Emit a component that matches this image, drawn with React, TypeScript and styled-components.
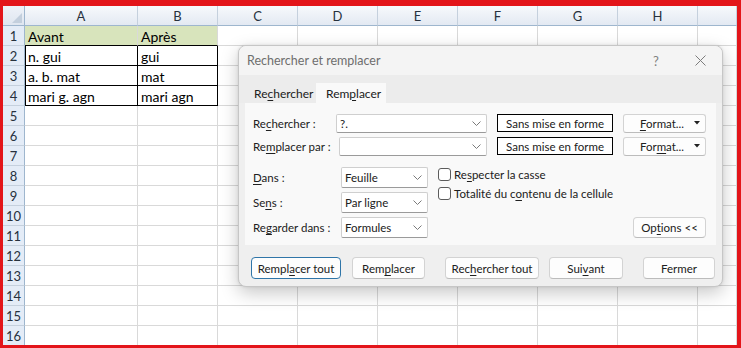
import React from 'react';
import styled, { createGlobalStyle } from 'styled-components';

const GlobalStyle = createGlobalStyle`
  html, body { margin: 0; padding: 0; background: #fff; }
  body { font-family: "Noto Sans", "Liberation Sans", sans-serif; }
`;

const Frame = styled.div`
  position: relative;
  width: 741px;
  height: 348px;
  box-sizing: border-box;
  border-style: solid;
  border-color: #e3151a;
  border-width: 6px 4px 3px 3px;
  overflow: hidden;
  background: #fff;
`;

const Sheet = styled.div`
  display: grid;
  grid-template-columns: 22px 113px repeat(7, 80px) 1fr;
  grid-auto-rows: 20px;
  font-family: Lato, "Liberation Sans", sans-serif;
`;

const Corner = styled.div`
  position: relative;
  box-sizing: border-box;
  background: linear-gradient(#eef2f8, #dfe6f0);
  border-right: 1px solid #9eb6ce;
  border-bottom: 1px solid #9eb6ce;
  &::after {
    content: '';
    position: absolute;
    right: 2px;
    bottom: 2px;
    border-style: solid;
    border-width: 0 0 10px 10px;
    border-color: transparent transparent #c3cfdd transparent;
  }
`;

const ColHead = styled.div`
  box-sizing: border-box;
  background: linear-gradient(#f7f9fc, #e3e9f2);
  border-right: 1px solid #c5d0dd;
  border-bottom: 1px solid #9eb6ce;
  display: flex;
  align-items: center;
  justify-content: center;
  font-size: 13px;
  color: #27313d;
`;

const RowHead = styled.div`
  box-sizing: border-box;
  background: #e4ecf7;
  border-right: 1px solid #9eb6ce;
  border-bottom: 1px solid #c5d0dd;
  display: flex;
  align-items: center;
  justify-content: center;
  font-size: 13px;
  color: #27313d;
`;

const Cell = styled.div<{ $green?: boolean; $boxed?: boolean; $bottomDark?: boolean; $leftDark?: boolean }>`
  box-sizing: border-box;
  background: ${(p) => (p.$green ? '#d8e4bc' : '#fff')};
  border-right: 1px solid ${(p) => (p.$boxed ? '#000' : '#d9d9d9')};
  border-bottom: 1px solid ${(p) => (p.$boxed || p.$bottomDark ? '#000' : '#d9d9d9')};
  box-shadow: ${(p) => (p.$leftDark ? 'inset 1px 0 0 #000' : 'none')};
  display: flex;
  align-items: center;
  padding: 1px 0 0 3px;
  font-size: 14px;
  color: #000;
  white-space: nowrap;
  overflow: hidden;
`;

const Dialog = styled.div`
  position: absolute;
  left: 235px;
  top: 39px;
  width: 485px;
  height: 242px;
  box-sizing: border-box;
  border: 1px solid #c6c6c6;
  border-radius: 8px;
  background: #efefef;
  box-shadow: 0 6px 18px rgba(0, 0, 0, 0.22), 0 0 3px rgba(0, 0, 0, 0.1);
  display: flex;
  flex-direction: column;
  overflow: hidden;
  font-family: Lato, "Noto Sans", sans-serif;
  font-size: 11.5px;
  color: #202020;
`;

const TitleBar = styled.div`
  height: 29px;
  flex: none;
  display: flex;
  align-items: center;
  background: #f4f4f4;
  padding-left: 8px;
`;

const Title = styled.div`
  flex: 1;
  color: #6e6e6e;
  font-size: 12.5px;
`;

const TitleButton = styled.div<{ $w: number }>`
  width: ${(p) => p.$w}px;
  height: 29px;
  display: flex;
  align-items: center;
  justify-content: center;
  color: #808080;
  font-size: 13px;
`;

const TabStrip = styled.div`
  height: 28px;
  flex: none;
  display: flex;
  align-items: flex-end;
  padding-left: 9px;
  background: #ececec;
`;

const Tab = styled.div<{ $w: number; $pad: number; $active?: boolean }>`
  width: ${(p) => p.$w}px;
  height: 20px;
  box-sizing: border-box;
  padding-left: ${(p) => p.$pad}px;
  display: flex;
  align-items: center;
  background: ${(p) => (p.$active ? '#f9f9f9' : 'transparent')};
  font-size: 12px;
`;

const Panel = styled.div`
  margin: 0 6px;
  height: 142px;
  flex: none;
  box-sizing: border-box;
  background: #f9f9f9;
  padding: 11px 10px 7px 8px;
  display: flex;
  flex-direction: column;
`;

const FindRow = styled.div<{ $top?: number }>`
  display: flex;
  align-items: center;
  height: 18px;
  margin-top: ${(p) => p.$top ?? 0}px;
`;

const Label = styled.div<{ $w: number }>`
  width: ${(p) => p.$w}px;
  flex: none;
  white-space: nowrap;
`;

const Combo = styled.div<{ $w: number; $h: number }>`
  width: ${(p) => p.$w}px;
  height: ${(p) => p.$h}px;
  flex: none;
  box-sizing: border-box;
  background: #fff;
  border: 1px solid #cfcfcf;
  border-bottom-color: #9a9a9a;
  border-radius: 2px;
  display: flex;
  align-items: center;
  padding: 0 5px 0 3px;
`;

const ComboText = styled.div`
  flex: 1;
  white-space: nowrap;
`;

const FormatBox = styled.div`
  width: 116px;
  height: 18px;
  margin-left: 10px;
  flex: none;
  box-sizing: border-box;
  border: 1px solid #000;
  background: #fff;
  display: flex;
  align-items: center;
  justify-content: center;
`;

const FormatButton = styled.div`
  width: 83px;
  height: 19px;
  margin-left: 10px;
  flex: none;
  box-sizing: border-box;
  border: 1px solid #d3d3d3;
  border-bottom-color: #bcbcbc;
  border-radius: 3px;
  background: #fdfdfd;
  display: flex;
  align-items: center;
  justify-content: flex-end;
  gap: 10px;
  padding-right: 5px;
`;

const Lower = styled.div`
  display: flex;
  margin-top: 12px;
`;

const LeftCol = styled.div`
  display: flex;
  flex-direction: column;
  gap: 4px;
`;

const OptRow = styled.div`
  display: flex;
  align-items: center;
  height: 21px;
`;

const Checks = styled.div`
  flex: 1;
  display: flex;
  flex-direction: column;
  gap: 6px;
  margin-left: 10px;
  padding-top: 1px;
`;

const CheckRow = styled.div`
  display: flex;
  align-items: center;
  gap: 3px;
  height: 13px;
`;

const CheckBox = styled.div`
  width: 13px;
  height: 13px;
  box-sizing: border-box;
  border: 1px solid #5c5c5c;
  border-radius: 3px;
  background: #fff;
`;

const Button = styled.div<{ $w: number; $gap?: number; $primary?: boolean }>`
  width: ${(p) => p.$w}px;
  height: 22px;
  margin-left: ${(p) => p.$gap ?? 0}px;
  flex: none;
  box-sizing: border-box;
  border: 1px solid ${(p) => (p.$primary ? '#2f75a8' : '#d3d3d3')};
  border-bottom-color: ${(p) => (p.$primary ? '#2f75a8' : '#bcbcbc')};
  border-radius: 4px;
  background: #fdfdfd;
  display: flex;
  align-items: center;
  justify-content: center;
  white-space: nowrap;
`;

const OptionsButton = styled(Button)`
  height: 21px;
  align-self: flex-end;
`;

const ButtonBar = styled.div`
  display: flex;
  margin-top: 12px;
  padding-left: 12px;
`;

const Key = styled.span`
  text-decoration: underline;
  text-underline-offset: 2px;
`;

const Chevron = () => (
  <svg width="9" height="5" viewBox="0 0 9 5">
    <path d="M0.5 0.5 L4.5 4.5 L8.5 0.5" fill="none" stroke="#7a7a7a" strokeWidth="1" />
  </svg>
);

const Caret = () => (
  <svg width="6" height="4" viewBox="0 0 6 4">
    <path d="M0 0 H6 L3 3.5 Z" fill="#222" />
  </svg>
);

const CloseIcon = () => (
  <svg width="11" height="11" viewBox="0 0 11 11">
    <path d="M0.5 0.5 L10.5 10.5 M10.5 0.5 L0.5 10.5" stroke="#7c7c7c" strokeWidth="1" />
  </svg>
);

const cols = ['A', 'B', 'C', 'D', 'E', 'F', 'G', 'H', ''];
const data: Record<number, [string, string]> = {
  1: ['Avant', 'Après'],
  2: ['n. gui', 'gui'],
  3: ['a. b. mat', 'mat'],
  4: ['mari g. agn', 'mari agn'],
};

export default function App() {
  const rows = Array.from({ length: 16 }, (_, i) => i + 1);
  return (
    <>
      <GlobalStyle />
      <Frame>
        <Sheet>
          <Corner />
          {cols.map((c, i) => (
            <ColHead key={i}>{c}</ColHead>
          ))}
          {rows.map((r) => (
            <React.Fragment key={r}>
              <RowHead>{r}</RowHead>
              {cols.map((_, ci) => {
                const inTable = data[r] && ci < 2;
                return (
                  <Cell
                    key={ci}
                    $green={r === 1 && ci < 2}
                    $boxed={inTable && r > 1}
                    $bottomDark={inTable && r === 1}
                    $leftDark={inTable && r > 1 && ci === 0}
                  >
                    {inTable ? data[r][ci] : ''}
                  </Cell>
                );
              })}
            </React.Fragment>
          ))}
        </Sheet>

        <Dialog>
          <TitleBar>
            <Title>Rechercher et remplacer</Title>
            <TitleButton $w={44}>?</TitleButton>
            <TitleButton $w={44}>
              <CloseIcon />
            </TitleButton>
          </TitleBar>
          <TabStrip>
            <Tab $w={68} $pad={6}>
              Re<Key>c</Key>hercher
            </Tab>
            <Tab $w={70} $pad={10} $active>
              Rem<Key>p</Key>lacer
            </Tab>
          </TabStrip>
          <Panel>
            <FindRow>
              <Label $w={83}>
                Re<Key>c</Key>hercher :
              </Label>
              <Combo $w={151} $h={19}>
                <ComboText>?.</ComboText>
                <Chevron />
              </Combo>
              <FormatBox>Sans mise en forme</FormatBox>
              <FormatButton>
                <span>
                  <Key>F</Key>ormat...
                </span>
                <Caret />
              </FormatButton>
            </FindRow>
            <FindRow $top={5}>
              <Label $w={86}>
                Re<Key>m</Key>placer par :
              </Label>
              <Combo $w={148} $h={19}>
                <ComboText />
                <Chevron />
              </Combo>
              <FormatBox>Sans mise en forme</FormatBox>
              <FormatButton>
                <span>
                  For<Key>m</Key>at...
                </span>
                <Caret />
              </FormatButton>
            </FindRow>
            <Lower>
              <LeftCol>
                <OptRow>
                  <Label $w={88}>
                    <Key>D</Key>ans :
                  </Label>
                  <Combo $w={87} $h={21}>
                    <ComboText>Feuille</ComboText>
                    <Chevron />
                  </Combo>
                </OptRow>
                <OptRow>
                  <Label $w={88}>
                    Se<Key>n</Key>s :
                  </Label>
                  <Combo $w={87} $h={21}>
                    <ComboText>Par ligne</ComboText>
                    <Chevron />
                  </Combo>
                </OptRow>
                <OptRow>
                  <Label $w={88}>
                    Re<Key>g</Key>arder dans :
                  </Label>
                  <Combo $w={87} $h={21}>
                    <ComboText>Formules</ComboText>
                    <Chevron />
                  </Combo>
                </OptRow>
              </LeftCol>
              <Checks>
                <CheckRow>
                  <CheckBox />
                  <span>
                    Re<Key>s</Key>pecter la casse
                  </span>
                </CheckRow>
                <CheckRow>
                  <CheckBox />
                  <span>
                    Totalité du c<Key>o</Key>ntenu de la cellule
                  </span>
                </CheckRow>
              </Checks>
              <OptionsButton $w={73}>
                Op<Key>t</Key>ions &lt;&lt;
              </OptionsButton>
            </Lower>
          </Panel>
          <ButtonBar>
            <Button $w={90} $primary>
              Rempl<Key>a</Key>cer tout
            </Button>
            <Button $w={73} $gap={11}>
              Rem<Key>p</Key>lacer
            </Button>
            <Button $w={94} $gap={20}>
              Rec<Key>h</Key>ercher tout
            </Button>
            <Button $w={74} $gap={10}>
              Sui<Key>v</Key>ant
            </Button>
            <Button $w={72} $gap={20}>
              Fermer
            </Button>
          </ButtonBar>
        </Dialog>
      </Frame>
    </>
  );
}
